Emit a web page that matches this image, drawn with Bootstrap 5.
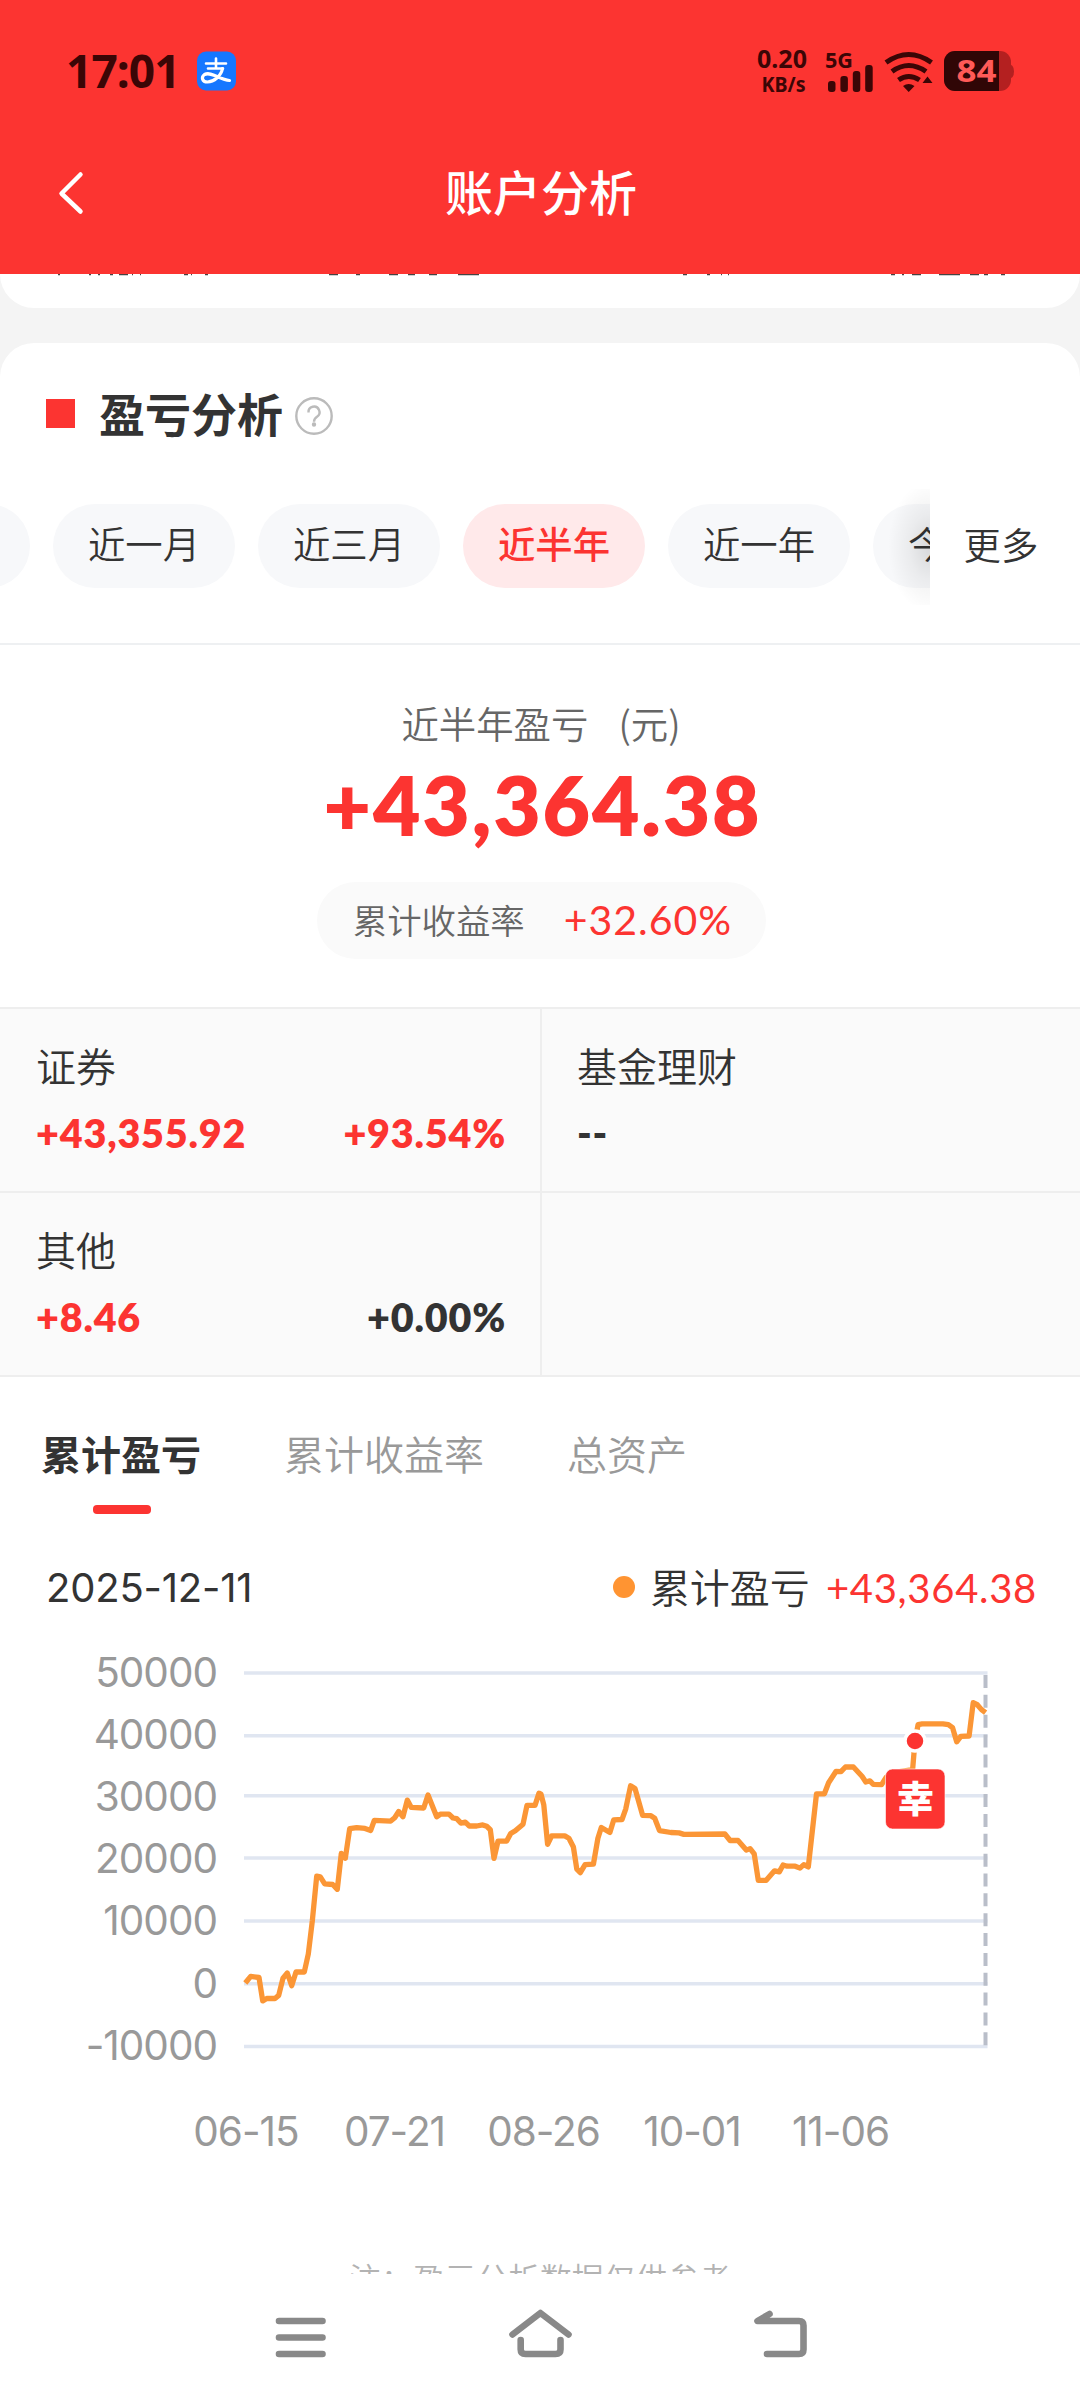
<!DOCTYPE html>
<html lang="zh-CN">
<head>
<meta charset="utf-8">
<meta name="viewport" content="width=device-width, initial-scale=1">
<title>账户分析</title>
<link href="https://cdn.jsdelivr.net/npm/bootstrap@5.3.0/dist/css/bootstrap.min.css" rel="stylesheet">
<style>
:root{--brand:#fc3431;--ink:#333;--line:#eee}
body{width:1080px;height:2400px;overflow:hidden;background:#f4f4f4;color:var(--ink);font-family:Inter,"Noto Sans CJK SC",sans-serif;font-size:40px;line-height:1}
.cjk{font-family:"Noto Sans CJK SC",sans-serif;font-weight:350}
.num{font-family:Lato,"Noto Sans CJK SC",sans-serif;letter-spacing:.7px}
.red{color:var(--brand)}
.app-head{height:274px;background:var(--brand)}
.status{height:142px;padding:0 66px 0 66px;color:#3b0606;font-family:"Noto Sans",sans-serif;font-weight:700}
.clock{font-size:46px;letter-spacing:-.9px;padding-bottom:2px}
.title-bar{height:102px;color:#fff}
.page-title{font-size:48px;font-weight:500;padding:0 0 6px 2px}
.prev-card{height:34px;border-radius:0 0 34px 34px}
.main-card{margin-top:35px;height:1931px;border-radius:34px 34px 0 0;overflow:hidden}
.sec-head{height:146px;padding-left:46px}
.sq{width:29px;height:29px;background:var(--brand);margin:0 24px 5px 0}
.sec-title{font-size:46px;font-weight:700;padding-bottom:9px}
.periods{height:156px;border-bottom:2px solid #eef0f2;overflow:hidden}
.pills{width:930px;gap:23px;padding-top:15px;overflow:hidden}
.pill{flex:none;width:182px;height:84px;border-radius:42px;background:#f7f8fa;font-size:37.4px;padding-bottom:4px}
.pill:first-child{margin-left:-152px}
.pill.on{background:#ffe9ea;color:var(--brand);font-weight:500}
.more{position:absolute;left:930px;top:0;width:150px;height:116px;font-size:37.4px;padding:0 8px 5px 0}
.more::before{content:"";position:absolute;z-index:-1;left:-42px;top:0;width:42px;height:116px;background:radial-gradient(ellipse 42px 66px at 100% 50%,rgba(0,0,0,.13),rgba(0,0,0,.05) 50%,transparent)}
.total{height:362px;padding-top:59px}
.total-lab{font-size:37.4px;color:#666;height:40px;padding-left:2px}
.total-num{font-size:82px;font-weight:800;height:100px;letter-spacing:1.8px;padding:19px 0 0 5px}
.rate{width:449px;height:77px;border-radius:39px;background:#fafafa;margin:38px 0 0 2px;gap:39px;padding:0 0 3px 3px}
.rate .cjk{font-size:34.4px;color:#666}
.rate .num{letter-spacing:1px;font-size:41px}
.grid-cell{height:184px;background:#fafafa;border-top:2px solid var(--line);padding:36px 34px 0 36px}
.grid-cell+.grid-cell{border-left:2px solid var(--line);padding-left:35px}
.val{font-size:39.5px;font-weight:800;margin-top:28px;letter-spacing:.8px}
.tabs{height:148px;border-top:2px solid var(--line);padding:56px 0 0 41px;gap:83px;color:#999}
.tab{height:80px;position:relative}
.tab.on{color:var(--ink);font-weight:700}
.tab.on::after{content:"";position:absolute;left:52px;top:72px;width:58px;height:9px;border-radius:4px;background:var(--brand)}
.legend{height:118px;padding:45px 43px 0 46px}
.legend .cjk{margin-top:-2px}
.dot{width:22px;height:22px;border-radius:50%;background:#ff9432;margin:8px 15px 0 0}
.note{height:33px;font-size:31.8px;color:#b3b3b3;white-space:nowrap}
.sysbar{height:126px}
</style>
</head>
<body>
<header class="app-head">
  <div class="status d-flex align-items-center justify-content-between">
    <div class="d-flex align-items-center">
      <span class="clock">17:01</span>
      <svg style="margin-left:14px" width="48" height="42" viewBox="0 0 48 42"><rect x="3" y="1.500" width="39" height="39" rx="9" fill="#1677ff"/><g fill="none" stroke="#fff" stroke-linecap="round"><path d="M12 13.500H32M22 8.500V18.500M14 18.500H29" stroke-width="2.600"/><path d="M28.500 18.500C27 26 20 32 13.500 32C8 32 7 27 10.500 24.500C17 21 26 30 35.500 30.500" stroke-width="3.200"/></g></svg>
    </div>
    <svg width="268" height="56" viewBox="746 43 268 56" fill="#3b0606">
      <g font-family="Noto Sans" font-weight="700"><text x="757" y="67.500" font-size="24.500" textLength="50" lengthAdjust="spacingAndGlyphs">0.20</text><text x="761.500" y="92" font-size="21" textLength="44" lengthAdjust="spacingAndGlyphs">KB/s</text><text x="825" y="68" font-size="21.500" textLength="28" lengthAdjust="spacingAndGlyphs">5G</text></g>
      <rect x="828" y="81" width="7.500" height="11" rx="3"/><rect x="840.400" y="76" width="7.500" height="16" rx="3"/><rect x="852.800" y="71" width="7.500" height="21" rx="3"/><rect x="865.200" y="65" width="7.500" height="27" rx="3"/>
      <g fill="none" stroke="#3b0606" stroke-width="5"><path d="M886 62.500Q908.700 46.500 931.500 62.500M892 71.500Q908.700 59.500 926 71.500M898.500 80Q908.700 73 919.500 80"/></g><path d="M903 86Q908.700 82 914.500 86L908.700 92ZM927.500 76.500L932.500 83H922.500Z"/>
      <path d="M1008 64q6 0 6 7.500t-6 7.500z" fill="#b42020"/><rect x="944" y="51" width="67" height="40" rx="11" fill="#b42020"/><path d="M955 51H999V91H955a11 11 0 0 1-11-11V62a11 11 0 0 1 11-11Z" fill="#300606"/><text x="956.500" y="82" font-family="Noto Sans" font-weight="700" font-size="31" fill="#ff5a57" textLength="40" lengthAdjust="spacingAndGlyphs">84</text>
    </svg>
  </div>
  <div class="title-bar position-relative d-flex align-items-center justify-content-center">
    <svg class="position-absolute" style="left:54px;top:26px" width="34" height="50" viewBox="54 168 34 50" fill="none" stroke="#fff" stroke-width="4.500" stroke-linecap="round" stroke-linejoin="round"><path d="M80.500 174.500L61.500 193.500L80.500 211.500"/></svg>
    <span class="page-title cjk">账户分析</span>
  </div>
</header>
<div class="prev-card bg-white"><svg class="d-block" width="1080" height="4" stroke="#444" stroke-width="1.500"><path d="M58 .5h2M89 .5h2M98 .5h2M110 .5h3M119 .5h9M132 .5h1M140 .5h1M184 .5h4M191 .5h1M205 .5h3M329 .5h9M356 .5h4M389 .5h9M408 .5h7M429 .5h8M458 .5h21M683 .5h4M707 .5h3M721 .5h1M728 .5h1M891 .5h4M902 .5h2M912 .5h9M939 .5h21M970 .5h9M984 .5h4M1001 .5h4"/></svg></div>
<main class="main-card bg-white">
  <div class="sec-head d-flex align-items-center"><span class="sq"></span><span class="sec-title cjk">盈亏分析</span>
    <svg style="margin-left:9px" width="44" height="44" viewBox="0 0 44 44" fill="none" stroke="#bbb" stroke-width="2.400"><circle cx="22" cy="22" r="17.700"/><path d="M16.500 18.500a5.500 5.500 0 1 1 8.500 4.200q-3 2-3 5" /><circle cx="22" cy="30.500" r="1" fill="#bbb"/></svg></div>
  <div class="periods position-relative cjk">
    <div class="pills d-flex"><span class="pill">&nbsp;</span><span class="pill d-flex align-items-center justify-content-center">近一月</span><span class="pill d-flex align-items-center justify-content-center">近三月</span><span class="pill on d-flex align-items-center justify-content-center">近半年</span><span class="pill d-flex align-items-center justify-content-center">近一年</span><span class="pill d-flex align-items-center ps-4"><span style="margin-left:11px">今</span></span></div>
    <div class="more z-1 d-flex align-items-center justify-content-center">更多</div>
  </div>
  <section class="total d-flex flex-column align-items-center">
    <div class="total-lab cjk d-flex align-items-center"><span>近半年盈亏</span><span style="margin-left:30px">(元)</span></div>
    <div class="total-num num red d-flex align-items-center">+43,364.38</div>
    <div class="rate d-flex align-items-center justify-content-center"><span class="cjk">累计收益率</span><span class="num red">+32.60%</span></div>
  </section>
  <section>
    <div class="row g-0"><div class="col-6 grid-cell"><div class="cjk">证券</div><div class="val num red d-flex justify-content-between"><span>+43,355.92</span><span>+93.54%</span></div></div><div class="col-6 grid-cell"><div class="cjk">基金理财</div><div class="val num">--</div></div></div>
    <div class="row g-0"><div class="col-6 grid-cell"><div class="cjk">其他</div><div class="val num d-flex justify-content-between"><span class="red">+8.46</span><span>+0.00%</span></div></div><div class="col-6 grid-cell"></div></div>
  </section>
  <nav class="tabs d-flex cjk"><span class="tab on">累计盈亏</span><span class="tab">累计收益率</span><span class="tab">总资产</span></nav>
  <div class="legend d-flex"><span style="letter-spacing:-.2px" class="me-auto">2025-12-11</span><span class="dot"></span><span class="cjk">累计盈亏</span><span class="num red ms-3">+43,364.38</span></div>
  <svg id="chart" class="d-block" width="1080" height="621" viewBox="0 1641 1080 621" font-size="40.500" fill="#999" letter-spacing="-1"></svg>
  <div class="note cjk text-center">注：盈亏分析数据仅供参考</div>
</main>
<footer class="sysbar bg-white">
  <svg class="d-block" width="1080" height="126" viewBox="0 2274 1080 126" fill="none" stroke="#898989" stroke-width="6.600" stroke-linecap="round" stroke-linejoin="round"><path d="M279 2321H322.500M279 2337.500H322.500M279 2354H322.500M512.500 2334.500L540.400 2313L568.500 2334.500M520.700 2340V2349.500Q520.700 2354 525.500 2354H555.500Q560.500 2354 560.500 2349.500V2340M769.500 2314L757.500 2321H799Q803.500 2321 803.500 2325.500V2349.500Q803.500 2354 799 2354H767"/></svg>
</footer>
<script src="https://cdn.jsdelivr.net/npm/bootstrap@5.3.0/dist/js/bootstrap.bundle.min.js"></script>
<script>
const rows=[[50000,1673],[40000,1735.7],[30000,1795.7],[20000,1858],[10000,1921],[0,1983.7],[-10000,2046.5]];
let out='';
rows.forEach(([v,y],i)=>{out+=`<path d="M244 ${y}H987.5" stroke="#e0e6f1" stroke-width="3.5"/><text x="217" y="${1686.5+i*62.2}" text-anchor="end">${v}</text>`});
[['06-15',246],['07-21',394.5],['08-26',543.5],['10-01',692],['11-06',840.5]].forEach(([t,x])=>{out+=`<text x="${x}" y="2145.500" text-anchor="middle">${t}</text>`});
// early segment of the series and late segment, each in its own units
const a=[556,996,572,977,597,980,608,1048,620,1041,645,1041,656,1032,669,982,682,967,695,1004,708,964,733,964,745,912,757,816,770,686,781,688,794,708,818,710,832,724,844,620,856,634,869,548,890,545,915,547,932,553,943,524,992,526,1004,516,1016,498,1029,513,1042,465,1054,486,1091,488,1104,450,1130,513,1141,506,1167,506,1179,517,1190,519,1203,532,1216,529,1228,540,1250,540,1268,537,1280,541,1291,551,1302,634,1314,584,1340,584,1352,562,1366,554,1389,535,1401,480,1425,480,1437,445];
const b=[3,612,11,640,22,743,34,721,72,721,84,727,97,750,107,808,117,817,131,796,155,795,168,727,178,699,203,712,214,679,238,678,249,651,263,590,276,597,298,667,321,668,333,675,347,707,380,712,404,713,418,717,537,716,552,733,575,733,599,758,610,754,622,768,634,837,657,837,681,812,695,815,706,797,718,800,741,800,755,805,766,796,779,802,803,611,826,611,838,582,860,552,874,553,887,541,910,541,935,565,946,580,958,577,968,586,992,587,1005,568,1030,555,1082,548,1089,473,1098,430,1110,428,1170,428,1186,430,1198,438,1210,475,1222,461,1246,460,1258,373,1270,378,1282,391,1294,399];
const p=[];
for(let i=0;i<a.length;i+=2)p.push((60+a[i]/3).toFixed(1)+','+(1640+a[i+1]/2.904).toFixed(1));
for(let i=0;i<b.length;i+=2)p.push((540+b[i]/2.904).toFixed(1)+','+(1560+b[i+1]/2.613).toFixed(1));
out+=`<path d="M985.5 1675V2046" stroke="#b9bec9" stroke-width="4" stroke-dasharray="13 6.850"/>
<polyline points="${p.join(' ')}" fill="none" stroke="#fb9636" stroke-width="5.300" stroke-linejoin="round"/>
<circle cx="915" cy="1741" r="10" fill="#fc3431" stroke="#fff" stroke-width="3.500"/>
<rect x="885.500" y="1769" width="59.500" height="60" rx="7" fill="#fc3431" stroke="#fff" stroke-opacity=".6" stroke-width="1"/>
<text x="915" y="1812.500" text-anchor="middle" font-family="Noto Sans CJK SC" font-weight="900" font-size="37" fill="#fff">幸</text>`;
document.getElementById('chart').innerHTML=out;
</script>
</body>
</html>
